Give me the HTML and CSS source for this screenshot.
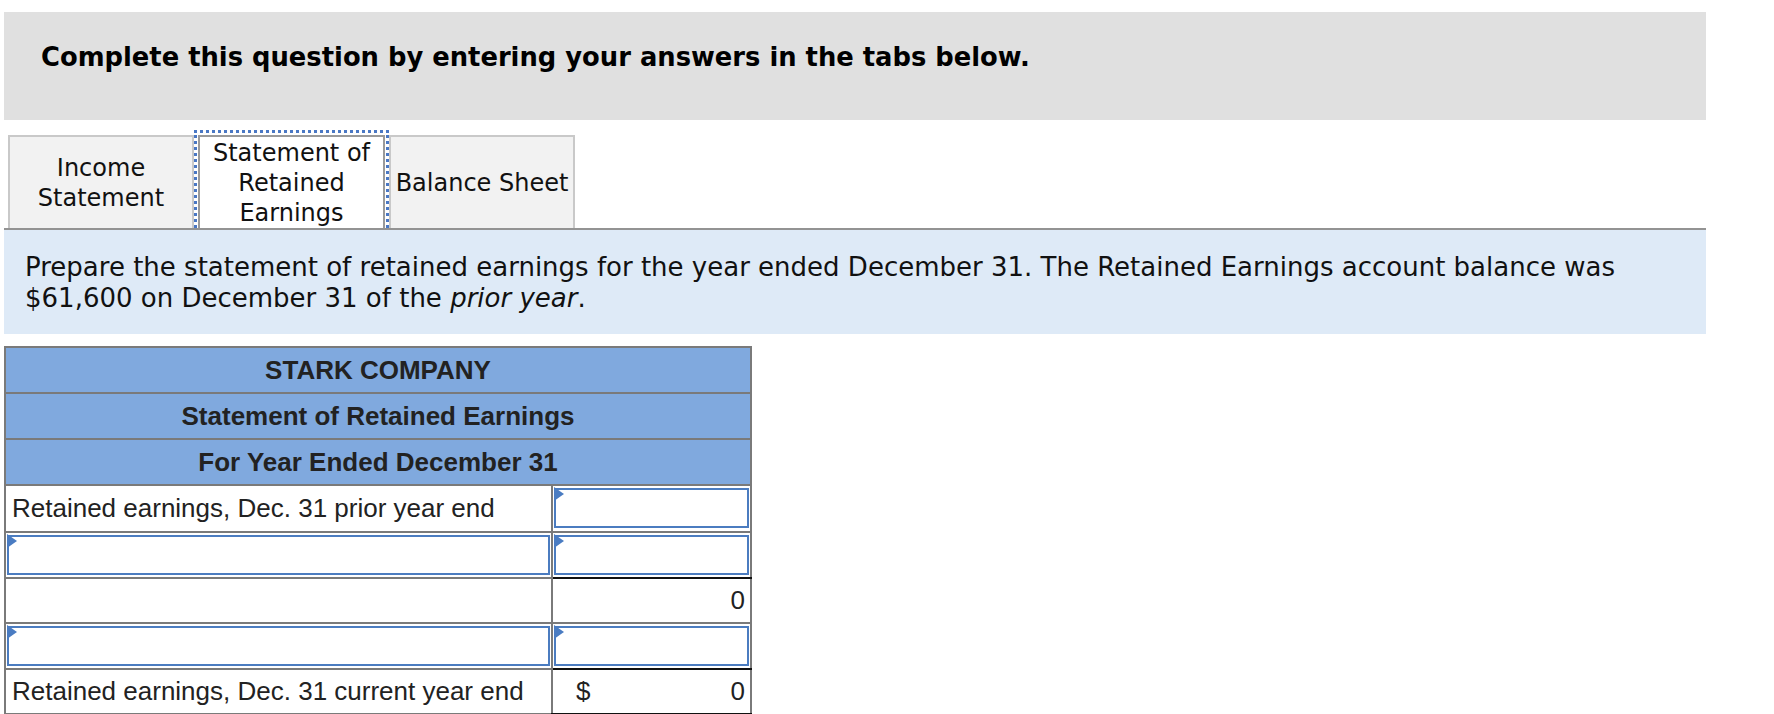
FILE: index.html
```html
<!DOCTYPE html>
<html>
<head>
<meta charset="utf-8">
<link rel="stylesheet" href="styles.css">
</head>
<body>
<div class="page">
  <div class="banner">Complete this question by entering your answers in the tabs below.</div>
  <div class="tabs">
    <div class="tab">Income<br>Statement</div>
    <div class="tab-focus"><div class="tab active">Statement of<br>Retained<br>Earnings</div></div>
    <div class="tab">Balance Sheet</div>
  </div>
  <div class="info">Prepare the statement of retained earnings for the year ended December 31. The Retained Earnings account balance was<br>$61,600 on December 31 of the <i>prior year</i>.</div>
  <table class="sheet">
    <colgroup><col class="c-label"><col class="c-amt"></colgroup>
    <tr><th colspan="2">STARK COMPANY</th></tr>
    <tr><th colspan="2">Statement of Retained Earnings</th></tr>
    <tr><th colspan="2">For Year Ended December 31</th></tr>
    <tr>
      <td class="label">Retained earnings, Dec. 31 prior year end</td>
      <td class="amt inp"><div class="box"><svg class="mark" width="10" height="14" viewBox="0 0 10 14"><path d="M0 0 L10 7 L0 14 Z" fill="#4a7cc2"/></svg></div></td>
    </tr>
    <tr>
      <td class="label inp"><div class="box"><svg class="mark" width="10" height="14" viewBox="0 0 10 14"><path d="M0 0 L10 7 L0 14 Z" fill="#4a7cc2"/></svg></div></td>
      <td class="amt inp ul"><div class="box"><svg class="mark" width="10" height="14" viewBox="0 0 10 14"><path d="M0 0 L10 7 L0 14 Z" fill="#4a7cc2"/></svg></div></td>
    </tr>
    <tr>
      <td class="label"></td>
      <td class="amt"><div class="num"><span></span><span>0</span></div></td>
    </tr>
    <tr>
      <td class="label inp"><div class="box"><svg class="mark" width="10" height="14" viewBox="0 0 10 14"><path d="M0 0 L10 7 L0 14 Z" fill="#4a7cc2"/></svg></div></td>
      <td class="amt inp ul"><div class="box"><svg class="mark" width="10" height="14" viewBox="0 0 10 14"><path d="M0 0 L10 7 L0 14 Z" fill="#4a7cc2"/></svg></div></td>
    </tr>
    <tr>
      <td class="label">Retained earnings, Dec. 31 current year end</td>
      <td class="amt final"><div class="num"><span>$</span><span>0</span></div></td>
    </tr>
  </table>
</div>
</body>
</html>
```
FILE: styles.css
```css
html, body {
  margin: 0;
  padding: 0;
  background: #ffffff;
}
.page {
  padding: 12px 0 0 4px;
  width: 1702px;
}
.banner {
  background: #e0e0e0;
  height: 108px;
  box-sizing: border-box;
  padding: 30px 0 0 37px;
  font-family: "DejaVu Sans", Verdana, sans-serif;
  font-weight: bold;
  font-size: 25.8px;
  line-height: 30px;
  color: #000;
}
.tabs {
  display: flex;
  align-items: flex-end;
  margin-top: 10px;
  padding-left: 4px;
  height: 98px;
  font-family: "DejaVu Sans", Verdana, sans-serif;
  font-size: 24px;
  line-height: 30px;
  color: #111;
}
.tab {
  box-sizing: border-box;
  height: 93px;
  width: 186px;
  background: #f2f2f2;
  border: 2px solid #c9c9c9;
  border-bottom: none;
  display: flex;
  align-items: center;
  justify-content: center;
  text-align: center;
}
.tab-focus {
  box-sizing: border-box;
  height: 98px;
  border: 3px dotted #4a78c4;
  border-bottom: none;
  padding: 2px 1px 0 1px;
  display: flex;
  align-items: flex-end;
}
.tab.active {
  background: #ffffff;
  border-color: #9a9a9a;
  width: 187px;
  height: 93px;
}
.info {
  border-top: 2px solid #939393;
  background: #deeaf7;
  height: 106px;
  box-sizing: border-box;
  padding: 22px 0 0 21px;
  font-family: "DejaVu Sans", Verdana, sans-serif;
  font-size: 26px;
  line-height: 31px;
  color: #111;
}
.sheet {
  margin-top: 12px;
  border-collapse: collapse;
  table-layout: fixed;
  width: 746px;
  font-family: "Liberation Sans", Arial, sans-serif;
  color: #222;
  border: 2px solid #7a7a7a;
}
.c-label { width: 547px; }
.c-amt { width: 199px; }
.sheet th {
  background: #80a9de;
  height: 44px;
  padding: 0;
  border: 2px solid #7a7a7a;
  font-size: 26px;
  font-weight: bold;
  text-align: center;
}
.sheet td {
  height: 42.6px;
  padding: 0;
  border: 2px solid #7a7a7a;
  font-size: 26px;
  vertical-align: middle;
}
.sheet td.label {
  padding-left: 6px;
}
.sheet td.inp,
.sheet td.label.inp {
  padding: 1px;
}
.sheet td.ul {
  border-bottom: 2px solid #111;
}
.box {
  position: relative;
  box-sizing: border-box;
  height: 40px;
  border: 2px solid #4b7cc0;
  background: #fff;
  overflow: visible;
}
.mark {
  position: absolute;
  left: -2px;
  top: -3px;
  display: block;
}
.num {
  display: flex;
  justify-content: space-between;
  padding: 0 5px 0 23px;
}
.sheet td.final {
  border-top: 2px solid #111;
  border-bottom: 3px solid #111;
}
```
